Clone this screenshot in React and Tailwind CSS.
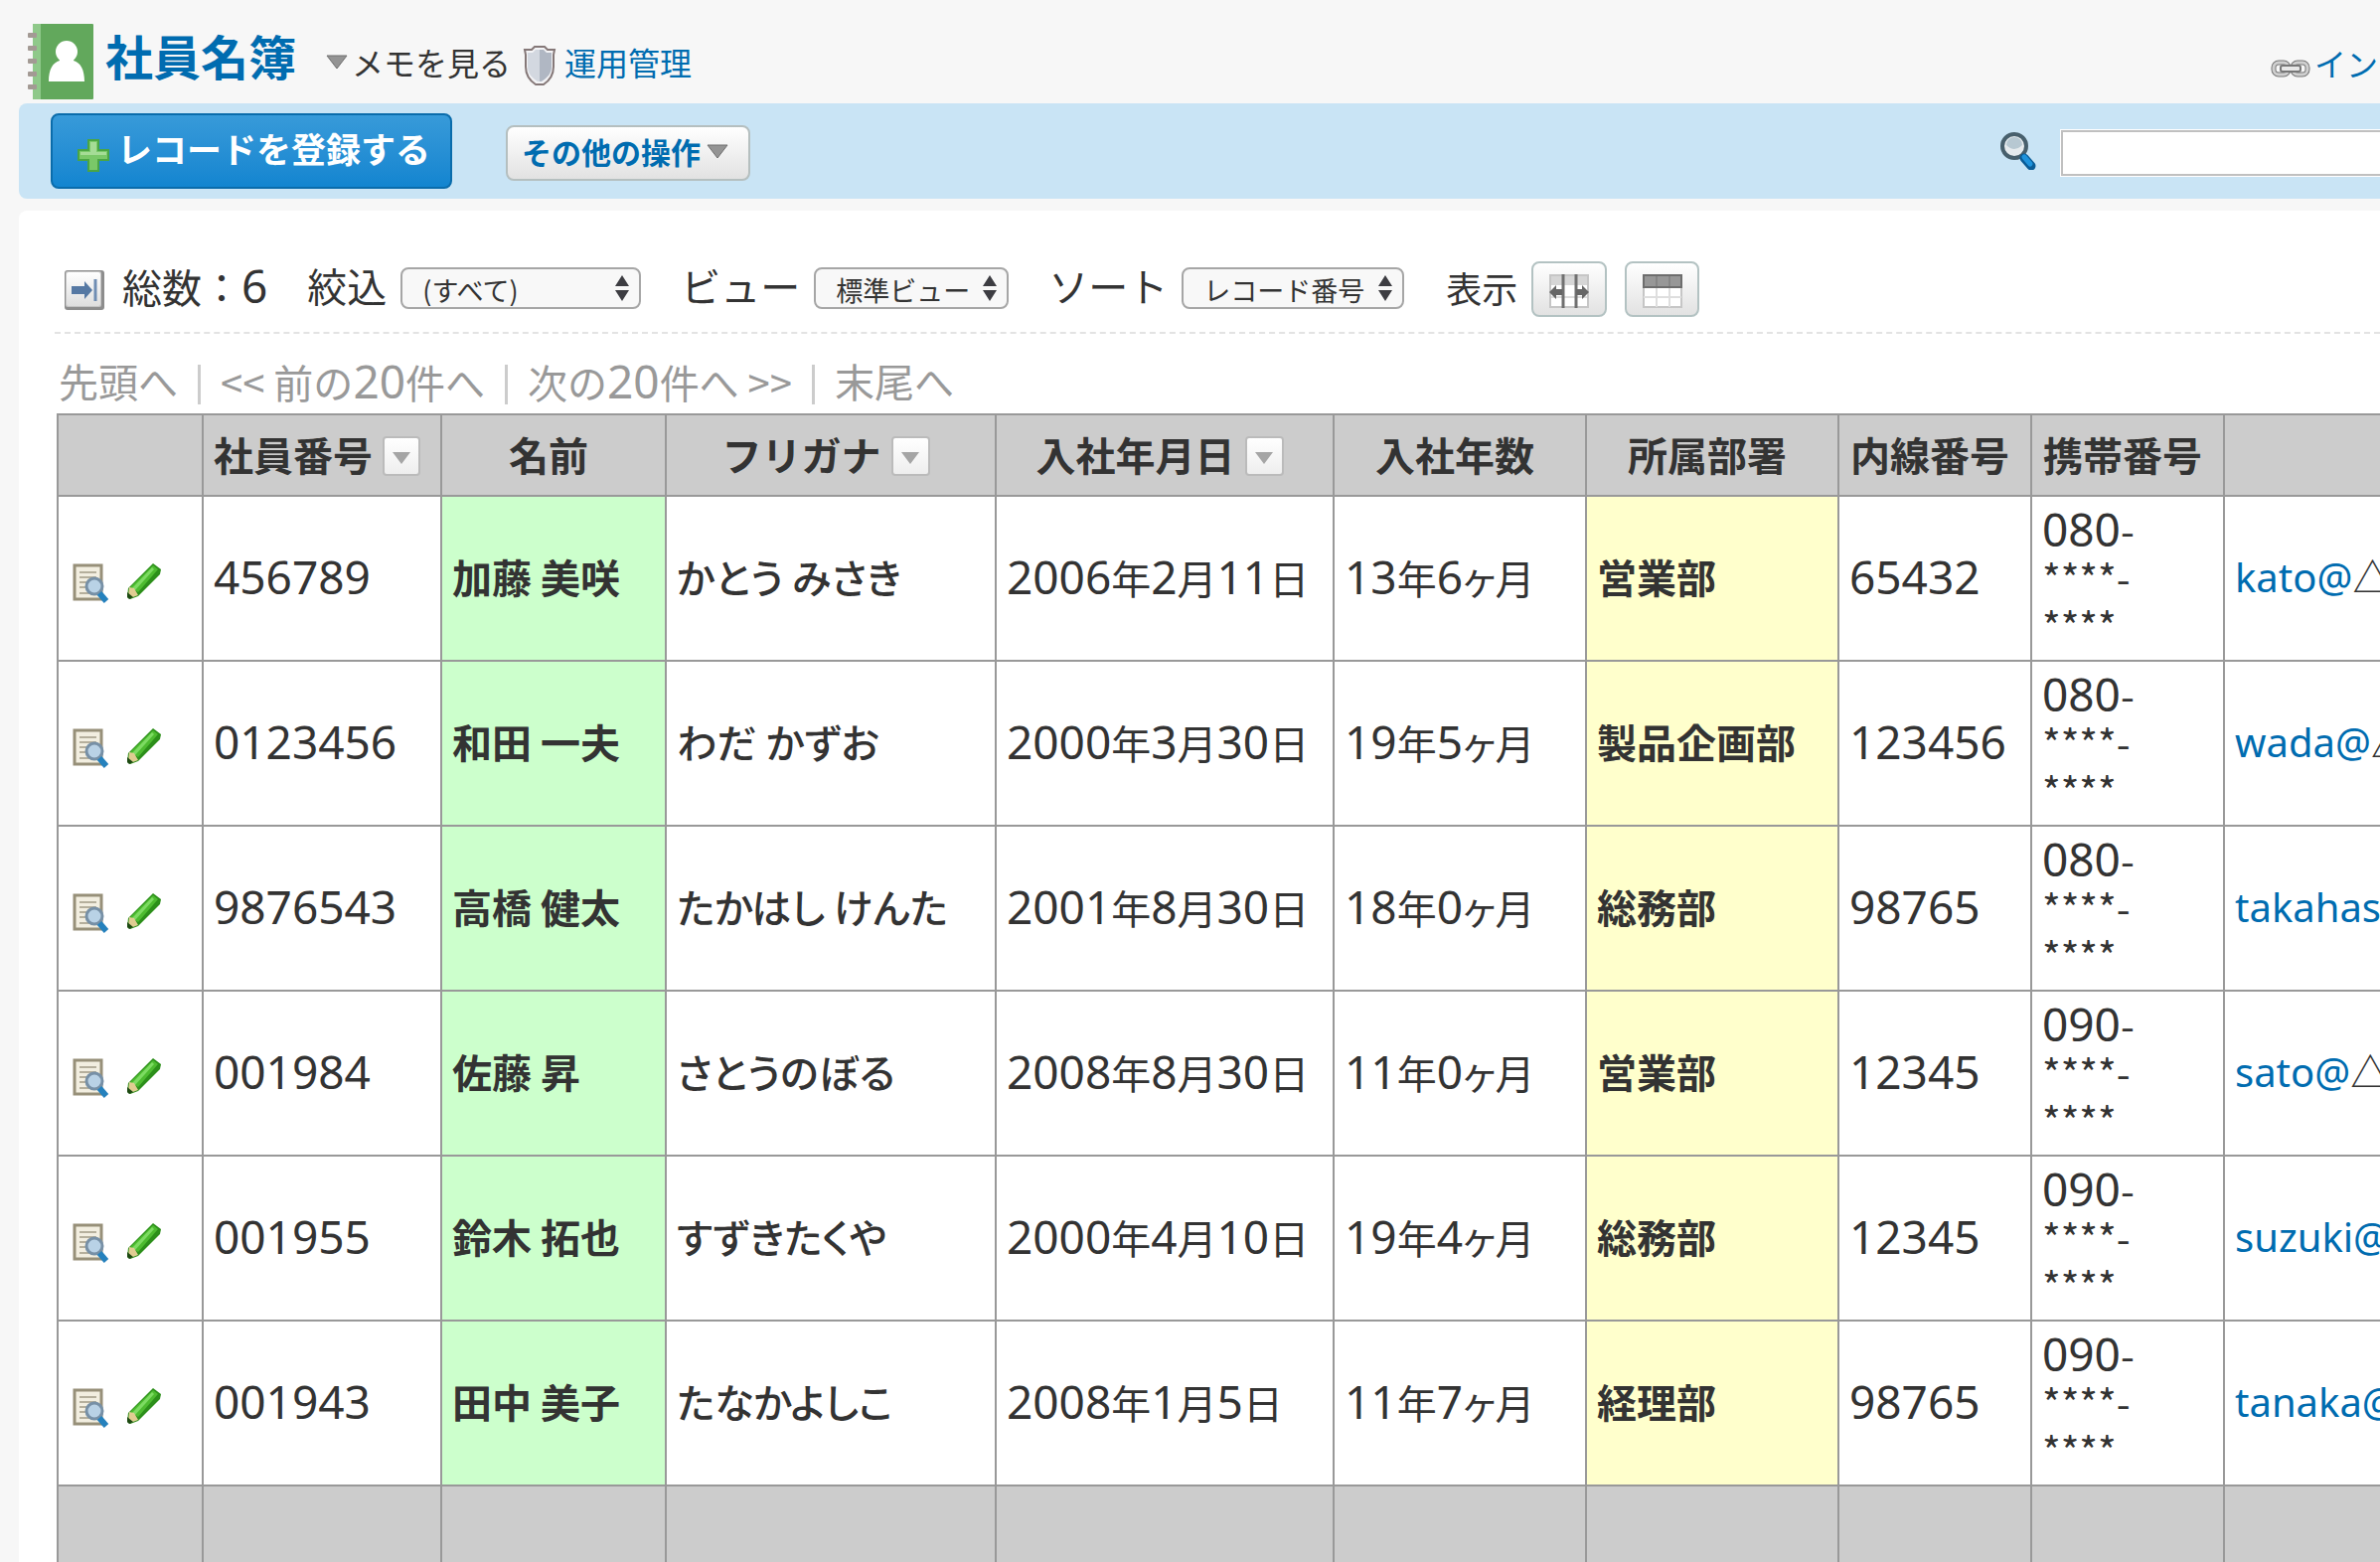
import React from "react";

const EMPLOYEES = [
  { id: "456789", name: "加藤 美咲", kana: "かとう みさき", joined: "2006年2月11日", years: "13年6ヶ月", dept: "営業部", ext: "65432", mobile: "080", user: "kato@", domain: "△△" },
  { id: "0123456", name: "和田 一夫", kana: "わだ かずお", joined: "2000年3月30日", years: "19年5ヶ月", dept: "製品企画部", ext: "123456", mobile: "080", user: "wada@", domain: "△△" },
  { id: "9876543", name: "高橋 健太", kana: "たかはし けんた", joined: "2001年8月30日", years: "18年0ヶ月", dept: "総務部", ext: "98765", mobile: "080", user: "takahashi@", domain: "△△" },
  { id: "001984", name: "佐藤 昇", kana: "さとうのぼる", joined: "2008年8月30日", years: "11年0ヶ月", dept: "営業部", ext: "12345", mobile: "090", user: "sato@", domain: "△△" },
  { id: "001955", name: "鈴木 拓也", kana: "すずきたくや", joined: "2000年4月10日", years: "19年4ヶ月", dept: "総務部", ext: "12345", mobile: "090", user: "suzuki@", domain: "△△" },
  { id: "001943", name: "田中 美子", kana: "たなかよしこ", joined: "2008年1月5日", years: "11年7ヶ月", dept: "経理部", ext: "98765", mobile: "090", user: "tanaka@", domain: "△△" },
];

const COLUMNS = [
  { label: "", width: "w-[146px]" },
  { label: "社員番号", width: "w-[240px]", filter: true },
  { label: "名前", width: "w-[226px]" },
  { label: "フリガナ", width: "w-[332px]", filter: true },
  { label: "入社年月日", width: "w-[340px]", filter: true },
  { label: "入社年数", width: "w-[254px]" },
  { label: "所属部署", width: "w-[254px]" },
  { label: "内線番号", width: "w-[194px]" },
  { label: "携帯番号", width: "w-[194px]" },
  { label: "", width: "" },
];

/* Sets the digits of a mixed string in the wider Latin face. */
function Figures({ text }) {
  return text.split(/(\d+)/).map((part, i) =>
    /^\d+$/.test(part) ? (
      <span key={i} className="font-['Noto_Sans'] text-[46px]">{part}</span>
    ) : (
      part
    )
  );
}

function AddressBook() {
  return (
    <svg viewBox="0 0 66 76" className="h-[76px] w-[66px] shrink-0" aria-hidden="true">
      <rect x="5" y="0" width="61" height="76" rx="1" fill="#62a85c" />
      <rect x="5" y="0" width="8" height="76" fill="#8fc98a" />
      {[9, 22, 35, 48, 61].map((y) => (
        <rect key={y} x="0" y={y} width="9" height="5" rx="1" fill="#a39a94" />
      ))}
      <circle cx="39" cy="28" r="11" fill="#fff" />
      <path d="M32 32h14v5c7 2 11 9 11 21H21c0-12 4-19 11-21z" fill="#fff" />
    </svg>
  );
}

function Shield() {
  return (
    <svg viewBox="0 0 34 40" className="h-10 w-[34px]" aria-hidden="true">
      <path d="M12 1h10l3 3h7l-1 5v12c0 8-4 14-10 18h-8C7 35 3 29 3 21V9L2 4h7z" fill="#f4f4f6" stroke="#857878" strokeWidth="2" />
      <path d="M13 4h4v32h-2C9 32 5 28 5 21V7h5z" fill="#d3d8e0" />
      <path d="M21 4h-4v32h2c6-4 10-8 10-15V7h-5z" fill="#b0b7c3" />
    </svg>
  );
}

function Triangle() {
  return (
    <svg viewBox="0 0 22 15" className="h-[15px] w-[22px]" aria-hidden="true">
      <path d="M1 1h20L11 14z" fill="#949494" stroke="#6f6f6f" strokeWidth="1" />
    </svg>
  );
}

function ChainLink() {
  return (
    <svg viewBox="0 0 40 18" className="h-[18px] w-10" aria-hidden="true">
      <g fill="none">
        <rect x="3" y="3" width="15" height="12" rx="5" stroke="#777" strokeWidth="5" />
        <rect x="22" y="3" width="15" height="12" rx="5" stroke="#777" strokeWidth="5" />
        <rect x="3" y="3" width="15" height="12" rx="5" stroke="#cfcfcf" strokeWidth="3" />
        <rect x="22" y="3" width="15" height="12" rx="5" stroke="#cfcfcf" strokeWidth="3" />
      </g>
      <rect x="10" y="6" width="20" height="6" rx="2" fill="#e8e8e8" stroke="#777" strokeWidth="2" />
    </svg>
  );
}

function Plus() {
  return (
    <svg viewBox="0 0 32 33" className="h-[33px] w-8" aria-hidden="true">
      <path d="M11 1h10v10h10v10H21v11H11V21H1V11h10z" fill="#7ac868" stroke="#4aa544" strokeWidth="2" />
      <path d="M13 3h6v10h10v3H3v-3h10z" fill="#a5dc96" />
    </svg>
  );
}

function Magnifier() {
  return (
    <svg viewBox="0 0 36 38" className="h-[38px] w-9" aria-hidden="true">
      <circle cx="14" cy="14" r="12" fill="#e6ebee" stroke="#48606d" strokeWidth="4" />
      <path d="M6 13a8 8 0 0 1 16 0q-8 8-16 0z" fill="#b7c8d2" />
      <path d="M24 26l7 8" stroke="#0b5c96" strokeWidth="9" strokeLinecap="round" />
      <path d="M24 25l6 7" stroke="#1f93dc" strokeWidth="5" strokeLinecap="round" />
    </svg>
  );
}

function ExpandIcon() {
  return (
    <svg viewBox="0 0 40 40" className="h-10 w-10" aria-hidden="true">
      <defs>
        <linearGradient id="expand" x1="0" y1="0" x2="0" y2="1">
          <stop offset="0" stopColor="#fff" />
          <stop offset="1" stopColor="#dedede" />
        </linearGradient>
      </defs>
      <rect x="0" y="0" width="40" height="40" rx="3" fill="#8d8d8d" />
      <rect x="1" y="1" width="36" height="36" rx="2" fill="#c4c4c4" />
      <rect x="2" y="2" width="34" height="34" rx="2" fill="url(#expand)" />
      <path d="M7 16h13v-5l8 9-8 9v-5H7z" fill="#5578a3" />
      <path d="M31 9v22" stroke="#6f8db3" strokeWidth="3" />
    </svg>
  );
}

function ColumnWidthIcon() {
  return (
    <svg viewBox="0 0 40 34" className="h-[34px] w-10" aria-hidden="true">
      <rect x="1" y="1" width="38" height="32" fill="#fff" stroke="#c6c6c6" strokeWidth="2" />
      <path d="M2 2h36v9H2z" fill="#d6d6d6" />
      <path d="M2 23h36" stroke="#dcdcdc" strokeWidth="2" />
      <path d="M14 0v34M27 0v34" stroke="#707070" strokeWidth="3" />
      <path d="M0 18l7-7v4h6v6H7v4zM40 18l-7-7v4h-6v6h6v4z" fill="#666" />
    </svg>
  );
}

function TableIcon() {
  return (
    <svg viewBox="0 0 40 34" className="h-[34px] w-10" aria-hidden="true">
      <rect x="1" y="1" width="38" height="32" fill="#fff" stroke="#c6c6c6" strokeWidth="2" />
      <path d="M14 13v20M27 13v20M1 23h38" stroke="#dedede" strokeWidth="2" />
      <rect x="1" y="1" width="38" height="12" fill="#979797" stroke="#6d6d6d" strokeWidth="2" />
      <path d="M14 2v10M27 2v10" stroke="#858585" strokeWidth="2" />
    </svg>
  );
}

function DetailIcon() {
  return (
    <svg viewBox="0 0 36 40" className="h-10 w-9" aria-hidden="true">
      <rect x="2" y="2" width="27" height="34" fill="#f2eee0" stroke="#979079" strokeWidth="3" />
      <path d="M7 9h17M7 14h17M7 19h8M7 24h6M7 30h10" stroke="#b5af9c" strokeWidth="2" />
      <circle cx="22" cy="23" r="8" fill="#b9d2e6" stroke="#7790a6" strokeWidth="3" />
      <path d="M27 30l7 8" stroke="#2581bd" strokeWidth="6" />
    </svg>
  );
}

function PencilIcon() {
  return (
    <svg viewBox="0 0 36 36" className="h-9 w-9" aria-hidden="true">
      <path d="M27 0l8 6-1 5L12 33l-8 3-3-2 1-9z" fill="#2c8f1a" />
      <path d="M27 2l5 4-20 23-8-5z" fill="#4dbb30" />
      <path d="M26 4l2 2L9 27l-3-2z" fill="#7ddb62" />
      <path d="M3 24l5 1 4 7-8 3-2-1z" fill="#e0cd92" />
      <path d="M1 29l6 5-4 2-2-2z" fill="#1d4a12" />
    </svg>
  );
}

function Dropdown({ label, value, width }) {
  return (
    <label className="ml-10 flex items-center gap-[14px]">
      <span className="pb-2">{label}</span>
      <span className="relative flex pb-0.5">
        <select
          defaultValue={value}
          className={`${width} h-[42px] appearance-none rounded-lg border-2 border-[#a6a6a6] bg-[#f8f8f8] pt-1 pl-5 text-[27px] leading-8 text-[#333]`}
        >
          <option>{value}</option>
        </select>
        <svg viewBox="0 0 14 26" className="pointer-events-none absolute top-2 right-3 h-[26px] w-3.5" aria-hidden="true">
          <path d="M0 11L7 0l7 11zM0 15l7 11 7-11z" fill="#3d3d42" />
        </svg>
      </span>
    </label>
  );
}

function Divider() {
  return <span className="mx-5 h-10 w-[3px] bg-[#ccc]" />;
}

export default function App() {
  return (
    <div className="min-h-screen overflow-hidden bg-[#f7f7f7] pl-[19px] font-['Noto_Sans_CJK_JP',sans-serif] text-[#333]">
      <header className="flex h-[104px] items-end whitespace-nowrap pb-1 pl-[9px]">
        <AddressBook />
        <h1 className="ml-3 pb-[13px] text-[48px] leading-[64px] font-bold text-[#006cb0]">社員名簿</h1>
        <div className="ml-[30px] flex h-[76px] items-center gap-2 text-[32px]">
          <button className="flex items-center gap-1">
            <Triangle />
            メモを見る
          </button>
          <a href="#admin" className="ml-1 flex items-center gap-2 text-[#006cb0]">
            <span className="pt-2"><Shield /></span>
            運用管理
          </a>
        </div>
        <a href="#import" className="mr-0.5 ml-auto flex h-[76px] items-center gap-1 pt-0.5 text-[32px] text-[#006cb0]">
          <span className="pt-3"><ChainLink /></span>
          イン
        </a>
      </header>

      <div className="flex h-24 items-center rounded-l-lg bg-[#c9e4f5] pl-8 whitespace-nowrap">
        <button className="flex h-[76px] w-[404px] items-center rounded-lg border-2 border-[#0a6cab] bg-linear-to-b from-[#379ad9] to-[#1285d0] pl-[25px] text-[35px] font-bold text-white">
          <span className="pt-2"><Plus /></span>
          <span className="ml-2 pb-1.5">レコードを登録する</span>
        </button>
        <div className="ml-[54px] pt-1">
          <button className="flex h-14 w-[246px] items-center gap-[6px] rounded-lg border-2 border-[#b5bfbf] bg-linear-to-b from-white to-[#e2e2e2] pb-1 pl-3.5 text-[30px] font-bold text-[#006cb0]">
            その他の操作
            <Triangle />
          </button>
        </div>
        <form className="ml-auto flex items-center gap-6" onSubmit={(e) => e.preventDefault()}>
          <button aria-label="検索"><Magnifier /></button>
          <div className="pt-1">
            <div className="bg-white py-px pl-px">
              <input type="text" aria-label="検索キーワード" className="block h-[46px] w-[321px] border-2 border-r-0 border-[#c0c0c0] bg-white px-3 text-[28px] outline-none" />
            </div>
          </div>
        </form>
      </div>

      <main className="mt-3 rounded-tl-lg bg-white pt-12 pl-9">
        <div className="flex h-[62px] items-center pl-[10px] text-[40px] leading-[60px] whitespace-nowrap">
          <button aria-label="一覧を広げる" className="pt-0.5"><ExpandIcon /></button>
          <span className="ml-[18px] pb-2">総数：<Figures text="6" /></span>
          <Dropdown label="絞込" value="(すべて)" width="w-[242px]" />
          <Dropdown label="ビュー" value="標準ビュー" width="w-[196px]" />
          <Dropdown label="ソート" value="レコード番号" width="w-[224px]" />
          <span className="ml-[42px] pb-1 text-[36px]">表示</span>
          <button aria-label="列幅" className="ml-3.5 flex h-14 w-[76px] items-center justify-center rounded-lg border-2 border-[#b3c2c2] bg-linear-to-b from-white to-[#e2e2e2] pt-1">
            <ColumnWidthIcon />
          </button>
          <button aria-label="見出し固定" className="ml-[18px] flex h-14 w-[75px] items-center justify-center rounded-lg border-2 border-[#b3c2c2] bg-linear-to-b from-white to-[#e2e2e2] pt-1">
            <TableIcon />
          </button>
        </div>

        <div className="mt-3 border-t-2 border-dashed border-[#e3e3e3]" />

        <nav className="flex h-20 items-center pt-[26px] pb-1 pl-1 text-[40px] leading-[50px] whitespace-nowrap text-[#999]">
          <span className="pb-2">先頭へ</span>
          <Divider />
          <span className="pb-2">&lt;&lt; 前の<Figures text="20" />件へ</span>
          <Divider />
          <span className="pb-2">次の<Figures text="20" />件へ &gt;&gt;</span>
          <Divider />
          <span className="pb-2">末尾へ</span>
        </nav>

        <div className="pl-0.5">
          <table className="w-full table-fixed border-collapse text-[40px] leading-[48px] whitespace-nowrap [&_td]:border-2 [&_td]:border-[#999] [&_td]:px-[10px] [&_td]:pb-1 [&_td:last-child]:border-r-0 [&_th]:border-2 [&_th]:border-[#999] [&_th:last-child]:border-r-0">
            <colgroup>
              {COLUMNS.map((c, i) => <col key={i} className={c.width} />)}
            </colgroup>
            <thead>
              <tr className="h-[82px] bg-[#ccc]">
                {COLUMNS.map((c, i) => (
                  <th key={i} className="pr-5 pl-[10px] font-bold">
                    <span className="flex items-center justify-center gap-[10px]">
                      <span className="pb-0.5">{c.label}</span>
                      {c.filter && (
                        <button aria-label={`${c.label}で絞り込む`} className="mt-0.5 flex h-10 w-[39px] items-center justify-center rounded-sm border-2 border-[#bbb] bg-linear-to-b from-white to-[#eee] pt-1">
                          <svg viewBox="0 0 18 12" className="h-3 w-[18px]" aria-hidden="true">
                            <path d="M0 0h18L9 12z" fill="#a5a5a5" />
                          </svg>
                        </button>
                      )}
                    </span>
                  </th>
                ))}
              </tr>
            </thead>
            <tbody>
              {EMPLOYEES.map((e) => (
                <tr key={e.id} className="h-[166px]">
                  <td>
                    <span className="flex items-start gap-[18px] pt-[14px] pl-1">
                      <a href="#detail" aria-label="詳細"><DetailIcon /></a>
                      <a href="#edit" aria-label="編集"><PencilIcon /></a>
                    </span>
                  </td>
                  <td><Figures text={e.id} /></td>
                  <td className="bg-[#ccffcc] font-bold">{e.name}</td>
                  <td className="font-medium [font-feature-settings:'palt']">{e.kana}</td>
                  <td><Figures text={e.joined} /></td>
                  <td className="[font-feature-settings:'palt']"><Figures text={e.years} /></td>
                  <td className="bg-[#ffffcc] font-bold">{e.dept}</td>
                  <td><Figures text={e.ext} /></td>
                  <td>
                    <Figures text={e.mobile} />-<br />
                    ****-<br />
                    ****
                  </td>
                  <td className="overflow-hidden">
                    <a href="#mail" className="font-['Noto_Sans'] text-[#006cb0]">{e.user}</a>
                    {e.domain}
                  </td>
                </tr>
              ))}
            </tbody>
            <tfoot>
              <tr className="h-[82px] bg-[#ccc]">
                {COLUMNS.map((c, i) => <td key={i} />)}
              </tr>
            </tfoot>
          </table>
        </div>
      </main>
    </div>
  );
}
